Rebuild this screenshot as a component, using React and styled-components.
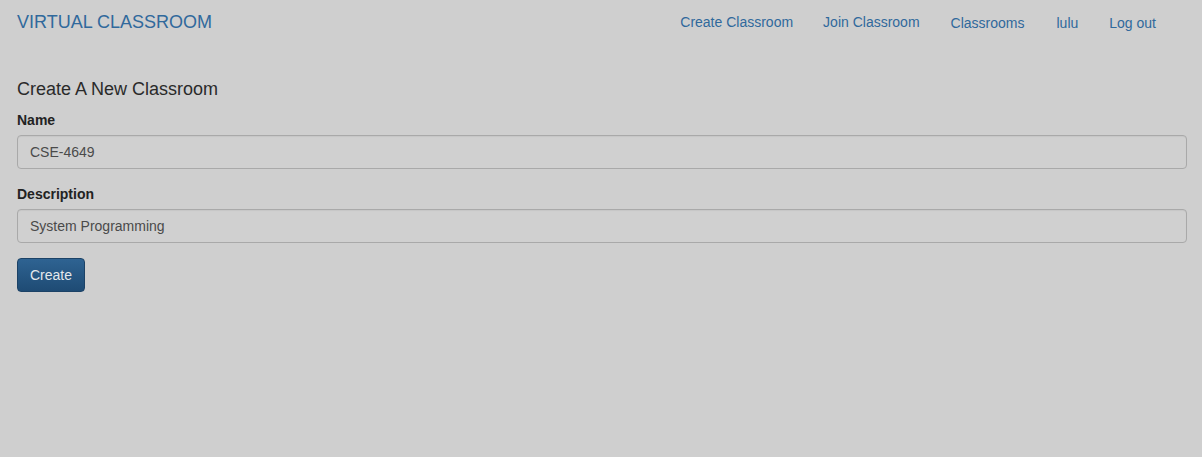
import React from 'react';
import styled, { createGlobalStyle } from 'styled-components';

const GlobalStyle = createGlobalStyle`
  body {
    margin: 0;
    background: #cfcfcf;
    font-family: 'Liberation Sans', Arial, sans-serif;
    font-size: 14px;
    color: #2b2b2b;
  }
`;

const StyledNavbar = styled.nav`
  display: flex;
  justify-content: space-between;
  align-items: center;
  height: 44px;
  padding: 0 31px 0 17px;
`;

const StyledBrand = styled.a`
  font-size: 18px;
  line-height: 20px;
  color: #30699c;
  text-decoration: none;
`;

const StyledNavList = styled.ul`
  display: flex;
  list-style: none;
  margin: 0;
  padding: 0;
`;

const StyledNavLink = styled.a`
  display: block;
  padding: 0 ${({ space }) => space || 15}px;
  line-height: 20px;
  color: #30699c;
  text-decoration: none;
  position: relative;
  top: ${({ low }) => (low ? '1px' : '0')};
`;

const StyledMain = styled.main`
  padding: 0 15px 0 17px;
`;

const StyledHeading = styled.h3`
  margin: 35px 0 11px;
  font-size: 18px;
  line-height: 20px;
  font-weight: 400;
  color: #2a2a2a;
`;

const StyledGroup = styled.div`
  margin-bottom: 15px;
`;

const StyledLabel = styled.label`
  display: block;
  margin-bottom: 5px;
  font-weight: 700;
  line-height: 20px;
  color: #222;
`;

const StyledInput = styled.input`
  display: block;
  box-sizing: border-box;
  width: 100%;
  height: 34px;
  padding: 6px 12px;
  font-family: inherit;
  font-size: 14px;
  color: #4a4a4a;
  background: #d0d0d0;
  border: 1px solid #a9a9a9;
  border-radius: 4px;
  box-shadow: inset 0 1px 1px rgba(0, 0, 0, 0.05);
  outline: none;
`;

const StyledButton = styled.button`
  box-sizing: border-box;
  width: 68px;
  height: 34px;
  padding: 6px 12px;
  font-family: inherit;
  font-size: 14px;
  color: #e4e8ec;
  background: linear-gradient(to bottom, #2e6392 0%, #1e4b74 100%);
  border: 1px solid #1c4266;
  border-radius: 4px;
`;

const navItems = [
  { label: 'Create Classroom' },
  { label: 'Join Classroom' },
  { label: 'Classrooms', low: true, space: 16 },
  { label: 'lulu', low: true, space: 16 },
  { label: 'Log out', low: true },
];

const App = () => (
  <>
    <GlobalStyle />
    <StyledNavbar>
      <StyledBrand href="#">VIRTUAL CLASSROOM</StyledBrand>
      <StyledNavList>
        {navItems.map(({ label, low, space }) => (
          <li key={label}>
            <StyledNavLink href="#" low={low} space={space}>
              {label}
            </StyledNavLink>
          </li>
        ))}
      </StyledNavList>
    </StyledNavbar>
    <StyledMain>
      <StyledHeading>Create A New Classroom</StyledHeading>
      <StyledGroup>
        <StyledLabel>Name</StyledLabel>
        <StyledInput defaultValue="CSE-4649" />
      </StyledGroup>
      <StyledGroup>
        <StyledLabel>Description</StyledLabel>
        <StyledInput defaultValue="System Programming" />
      </StyledGroup>
      <StyledButton>Create</StyledButton>
    </StyledMain>
  </>
);

export default App;
